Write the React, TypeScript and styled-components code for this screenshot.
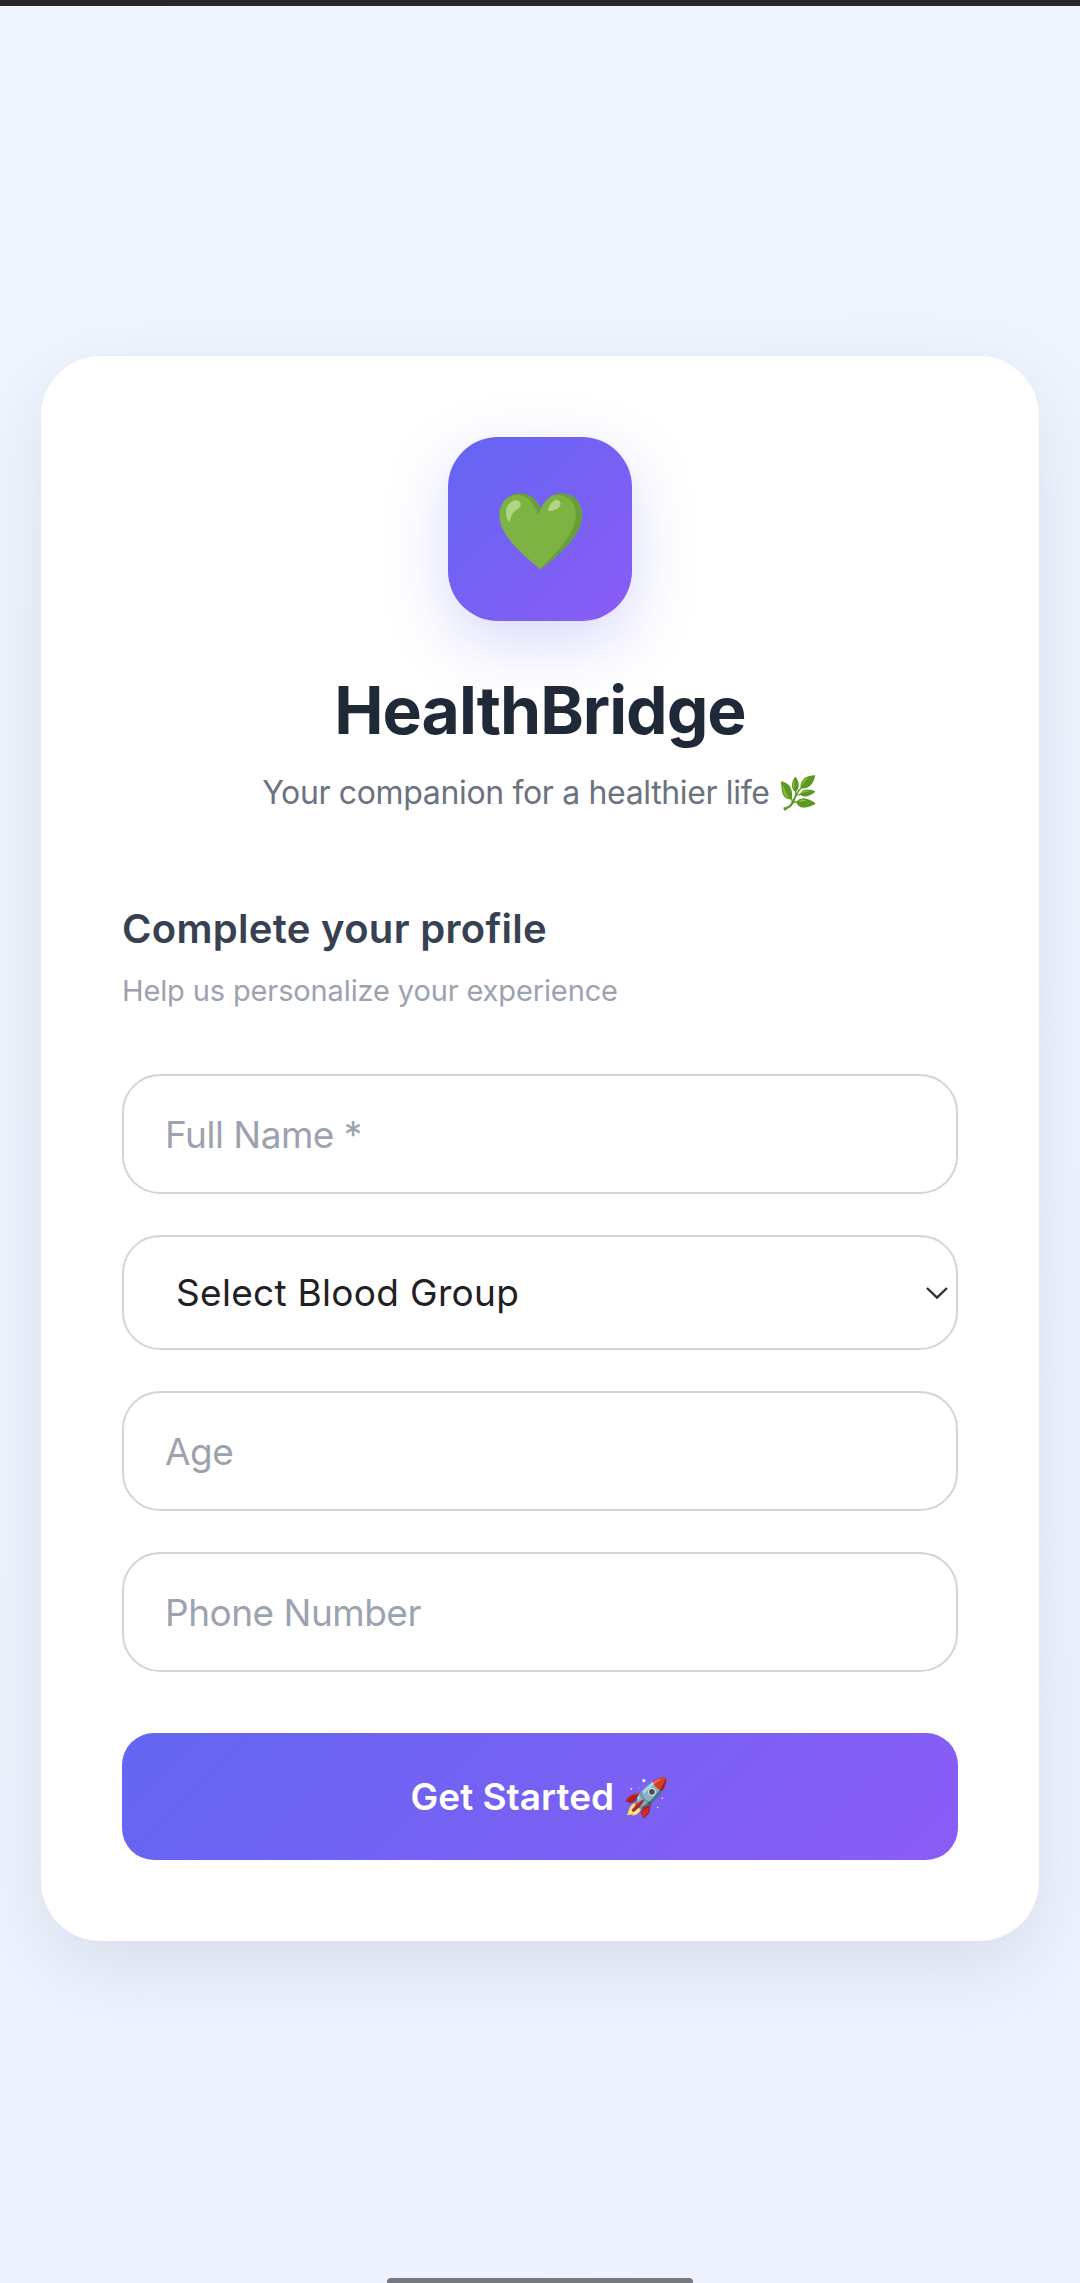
import React from "react";
import styled, { createGlobalStyle } from "styled-components";

const GlobalStyle = createGlobalStyle`
  html, body {
    margin: 0;
    padding: 0;
  }
  * {
    box-sizing: border-box;
  }
  body {
    font-family: Inter, "Noto Sans", sans-serif;
    background: #eef2fd;
  }
`;

const Page = styled.div`
  position: relative;
  width: 1080px;
  height: 2283px;
  overflow: hidden;
  display: flex;
  flex-direction: column;
  background: linear-gradient(160deg, #eff6ff 0%, #eef2ff 100%);
`;
const TopStrip = styled.div`
  height: 6px;
  flex: none;
  background: #25272b;
`;
const Main = styled.main`
  flex: 1;
  padding: 350px 41px 0;
`;
const Card = styled.section`
  height: 1585px;
  padding: 81px 81px 0;
  background: #ffffff;
  border-radius: 60px;
  box-shadow: 0 26px 79px rgba(31, 41, 55, 0.1);
  display: flex;
  flex-direction: column;
`;
const Brand = styled.header`
  display: flex;
  flex-direction: column;
  align-items: center;
`;
const LogoTile = styled.div`
  width: 184px;
  height: 184px;
  border-radius: 50px;
  background: linear-gradient(135deg, #6366f1 0%, #8b5cf6 100%);
  box-shadow: 0 21px 63px rgba(99, 102, 241, 0.25);
  font-size: 75px;
  display: flex;
  align-items: center;
  justify-content: center;
`;
const Title = styled.h1`
  margin: 49px 0 0;
  font-size: 66px;
  line-height: 80px;
  font-weight: 700;
  letter-spacing: -1px;
  color: #1f2937;
`;
const Tagline = styled.p`
  margin: 19px 0 0;
  font-size: 32px;
  line-height: 48px;
  font-weight: 400;
  letter-spacing: -0.35px;
  color: #6b7280;
  display: flex;
  align-items: center;
  gap: 8px;
`;
const FormHead = styled.div`
  margin-top: 86px;
`;
const FormTitle = styled.h2`
  margin: 0;
  font-size: 40px;
  line-height: 52px;
  font-weight: 600;
  letter-spacing: 0.3px;
  color: #374151;
`;
const FormHint = styled.p`
  margin: 13px 0 0;
  font-size: 29px;
  line-height: 46px;
  font-weight: 400;
  letter-spacing: -0.13px;
  color: #9ca3af;
`;
const Form = styled.form`
  margin-top: 60px;
  display: flex;
  flex-direction: column;
  gap: 41px;
`;
const Field = styled.input`
  width: 100%;
  height: 120px;
  padding: 0 41px;
  border: 2px solid #d1d5db;
  border-radius: 38px;
  background: #ffffff;
  font: 400 37px Inter, sans-serif;
  letter-spacing: -0.5px;
  color: #1f2937;
  outline: none;
  &::placeholder {
    color: #9ca3af;
    opacity: 1;
  }
`;
const SelectWrap = styled.div`
  position: relative;
  height: 115px;
`;
const Select = styled.select`
  width: 100%;
  height: 100%;
  padding: 0 0 0 52px;
  appearance: none;
  border: 2px solid #d1d5db;
  border-radius: 38px;
  background: #ffffff;
  font: 400 37px Inter, sans-serif;
  letter-spacing: 0.3px;
  color: #1f2024;
  outline: none;
`;
const Chevron = styled.svg`
  position: absolute;
  right: 9px;
  top: 50%;
  margin-top: -7px;
  width: 24px;
  height: 14px;
  pointer-events: none;
`;
const Submit = styled.button`
  height: 127px;
  margin-top: 20px;
  border: none;
  border-radius: 32px;
  background: linear-gradient(135deg, #6366f1 0%, #8b5cf6 100%);
  color: #ffffff;
  font: 600 37px Inter, sans-serif;
  letter-spacing: 0;
  display: flex;
  align-items: center;
  justify-content: center;
  gap: 9px;
`;
const HomeBar = styled.div`
  position: absolute;
  left: 387px;
  bottom: 0;
  width: 306px;
  height: 5px;
  border-radius: 4px 4px 0 0;
  background: #77787e;
`;

const App = () => {
  return (
    <Page>
      <GlobalStyle />
      <TopStrip />
      <Main>
        <Card>
          <Brand>
            <LogoTile>💚</LogoTile>
            <Title>HealthBridge</Title>
            <Tagline>Your companion for a healthier life 🌿</Tagline>
          </Brand>
          <FormHead>
            <FormTitle>Complete your profile</FormTitle>
            <FormHint>Help us personalize your experience</FormHint>
          </FormHead>
          <Form>
            <Field placeholder="Full Name *" />
            <SelectWrap>
              <Select defaultValue="">
                <option value="">Select Blood Group</option>
              </Select>
              <Chevron viewBox="0 0 24 14">
                <path d="M2 2l10 9.5L22 2" fill="none" stroke="#303030" strokeWidth="2.4" />
              </Chevron>
            </SelectWrap>
            <Field placeholder="Age" />
            <Field placeholder="Phone Number" />
            <Submit type="button">Get Started 🚀</Submit>
          </Form>
        </Card>
      </Main>
      <HomeBar />
    </Page>
  );
};

export default App;
